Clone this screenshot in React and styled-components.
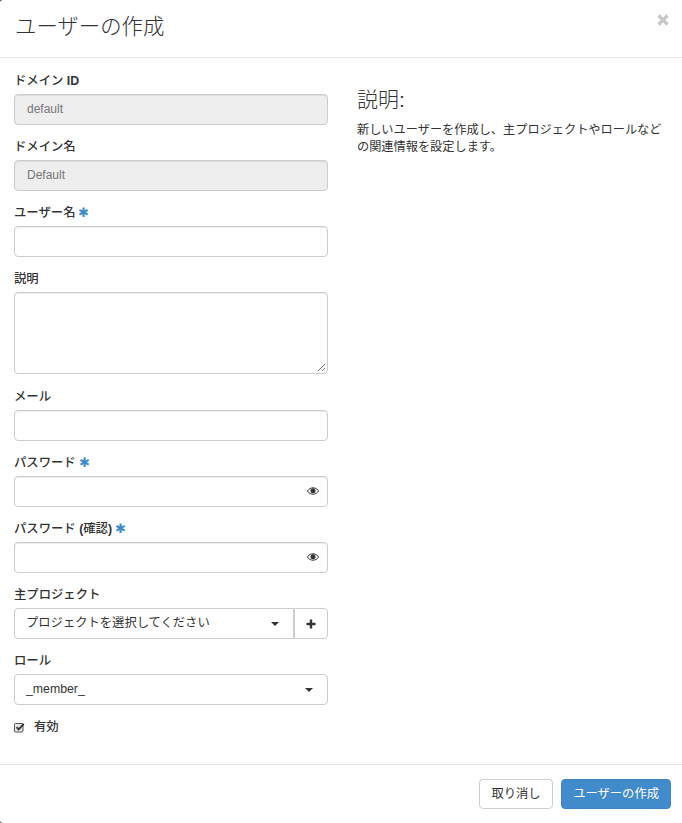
import React from 'react'
import styled, {createGlobalStyle} from 'styled-components'

const fontStack = `"Liberation Sans", "Noto Sans CJK JP", sans-serif`

const GlobalStyle = createGlobalStyle`
  html, body {
    margin: 0;
    background: #555;
  }

  body {
    font-family: ${fontStack};
    font-size: 12px;
    line-height: 1.42857;
    color: #333;
  }

  * {
    box-sizing: border-box;
  }
`

const Modal = styled.div`
  width: 682px;
  height: 823px;
  display: flex;
  flex-direction: column;
  background: #fff;
  border-radius: 3px 0 0 3px;
  overflow: hidden;
`

const Header = styled.header`
  height: 58px;
  padding: 14px 13px 0 15px;
  display: flex;
  justify-content: space-between;
  align-items: flex-start;
  border-bottom: 1px solid #e5e5e5;
`

const Title = styled.h4`
  margin: 0;
  font-size: 21.4px;
  font-weight: 300;
  line-height: 27px;
`

const Close = styled.button`
  margin: 0;
  padding: 0;
  border: 0;
  background: none;
  color: #c8c8c8;
  display: flex;
  width: 12px;
  height: 12px;
`

const Body = styled.div`
  flex: 1;
  padding: 16px 14px 0;
  display: grid;
  grid-template-columns: 314px 1fr;
  column-gap: 29px;
`

const Form = styled.div`
  display: flex;
  flex-direction: column;
`

const Group = styled.div`
  margin-bottom: ${p => p.$tall ? '16px' : '15px'};
`

const Label = styled.label`
  display: block;
  height: 15px;
  margin-bottom: 5px;
  font-weight: 500;
  font-size: 12.35px;
  line-height: 15px;
  color: #333;
`

const Latin = styled.span`
  font-weight: 700;
`

const Required = styled.span`
  color: #428bca;
  font-size: 13px;
  line-height: 0;
  margin-left: 3px;
`

const Input = styled.div`
  position: relative;
  height: ${p => p.$tall ? '82px' : '31px'};
  padding: 6px 12px;
  border: 1px solid #ccc;
  border-radius: 4px;
  background: ${p => p.$disabled ? '#eee' : '#fff'};
  color: ${p => p.$disabled ? '#777' : '#555'};
  font-size: 12px;
  line-height: 16px;
  box-shadow: inset 0 1px 1px rgba(0, 0, 0, .075);
`

const EyeSlot = styled.span`
  position: absolute;
  right: 8px;
  top: 9px;
  display: flex;
  color: #333;
`

const Grip = styled.svg`
  position: absolute;
  right: 1px;
  bottom: 1px;
`

const SelectBox = styled.div`
  flex: 1;
  min-width: 0;
  height: 31px;
  padding: 0 14px 0 11px;
  display: flex;
  align-items: center;
  justify-content: space-between;
  border: 1px solid #ccc;
  border-radius: ${p => p.$joined ? '4px 0 0 4px' : '4px'};
  background: #fff;
  font-size: 12.3px;
  color: #333;
`

const Caret = styled.span`
  width: 0;
  height: 0;
  border-top: 4px solid #333;
  border-left: 4px solid transparent;
  border-right: 4px solid transparent;
`

const SelectRow = styled.div`
  display: flex;
`

const AddButton = styled.button`
  width: 34px;
  height: 31px;
  padding: 0;
  display: flex;
  align-items: center;
  justify-content: center;
  border: 1px solid #ccc;
  border-radius: 0 4px 4px 0;
  background: #fff;
  color: #333;
`

const CheckRow = styled.label`
  display: flex;
  align-items: center;
  gap: 9px;
  font-weight: 500;
  font-size: 12.35px;
  line-height: 15px;
`

const Help = styled.aside`
  padding-top: 15px;
`

const HelpTitle = styled.h3`
  margin: 0 0 11px;
  font-size: 21px;
  font-weight: 300;
  line-height: 22px;
`

const HelpText = styled.p`
  margin: 0;
  width: 310px;
  font-size: 12.2px;
  line-height: 17px;
`

const Footer = styled.footer`
  height: 59px;
  padding: 14px 11px 0 15px;
  display: flex;
  justify-content: flex-end;
  align-items: flex-start;
  gap: 8px;
  border-top: 1px solid #e5e5e5;
`

const Button = styled.button`
  height: 30px;
  padding: 0 ${p => p.$primary ? '11px' : '11.5px'};
  border: 1px solid ${p => p.$primary ? '#3f85c1' : '#ccc'};
  border-radius: 4px;
  background: ${p => p.$primary ? '#428bca' : '#fff'};
  color: ${p => p.$primary ? '#fff' : '#333'};
  font-family: ${fontStack};
  font-size: 12.3px;
  line-height: 17px;
`

const CloseIcon = () => (
  <svg width="12" height="12" viewBox="0 0 12 12">
    <path d="M1.500 1.500l9 9M10.500 1.500l-9 9" stroke="currentColor" strokeWidth="3.400" fill="none"/>
  </svg>
)

const EyeIcon = () => (
  <svg width="12" height="10" viewBox="0 0 12 10">
    <path d="M.4 5C1.800 2.800 3.800 1.800 6 1.800S10.200 2.800 11.600 5C10.200 7.200 8.200 8.200 6 8.200S1.800 7.200.4 5z" fill="none" stroke="currentColor" strokeWidth="1"/>
    <circle cx="6" cy="4.800" r="2.500" fill="currentColor"/>
  </svg>
)

const PlusIcon = () => (
  <svg width="10" height="10" viewBox="0 0 10 10">
    <path d="M5 .5v9M.5 5h9" stroke="currentColor" strokeWidth="2.400" fill="none"/>
  </svg>
)

const CheckIcon = () => (
  <svg width="11" height="11" viewBox="0 0 11 11">
    <rect x=".5" y="1.500" width="8.500" height="8.500" rx="1" fill="#e6e6e6" stroke="#555" strokeWidth="1"/>
    <path d="M2.600 5.200L4.600 7.400 9.800 1.800" fill="none" stroke="#333" strokeWidth="1.800"/>
  </svg>
)

const fields = [
  {id: 'domain-id', label: <>ドメイン <Latin>ID</Latin></>, value: 'default', disabled: true},
  {id: 'domain-name', label: 'ドメイン名', value: 'Default', disabled: true},
  {id: 'name', label: 'ユーザー名', required: true},
  {id: 'description', label: '説明', tall: true},
  {id: 'email', label: 'メール'},
  {id: 'password', label: 'パスワード', required: true, eye: true},
  {id: 'confirm', label: <>パスワード <Latin>(</Latin>確認<Latin>)</Latin></>, required: true, eye: true}
]

const App = () => (
  <>
    <GlobalStyle/>
    <Modal>
      <Header>
        <Title>ユーザーの作成</Title>
        <Close aria-label="close"><CloseIcon/></Close>
      </Header>

      <Body>
        <Form>
          {fields.map(field => (
            <Group key={field.id} $tall={field.tall}>
              <Label>
                {field.label}
                {field.required && <Required>✱</Required>}
              </Label>
              <Input $disabled={field.disabled} $tall={field.tall}>
                {field.value}
                {field.eye && <EyeSlot><EyeIcon/></EyeSlot>}
                {field.tall && (
                  <Grip width="10" height="10" viewBox="0 0 10 10">
                    <path d="M9 2L2 9M9 6L6 9" stroke="#777" strokeWidth="1" fill="none"/>
                  </Grip>
                )}
              </Input>
            </Group>
          ))}

          <Group>
            <Label>主プロジェクト</Label>
            <SelectRow>
              <SelectBox $joined>
                プロジェクトを選択してください
                <Caret/>
              </SelectBox>
              <AddButton aria-label="add"><PlusIcon/></AddButton>
            </SelectRow>
          </Group>

          <Group>
            <Label>ロール</Label>
            <SelectBox>
              _member_
              <Caret/>
            </SelectBox>
          </Group>

          <CheckRow><CheckIcon/>有効</CheckRow>
        </Form>

        <Help>
          <HelpTitle>説明:</HelpTitle>
          <HelpText>新しいユーザーを作成し、主プロジェクトやロールなどの関連情報を設定します。</HelpText>
        </Help>
      </Body>

      <Footer>
        <Button>取り消し</Button>
        <Button $primary>ユーザーの作成</Button>
      </Footer>
    </Modal>
  </>
)

export default App
